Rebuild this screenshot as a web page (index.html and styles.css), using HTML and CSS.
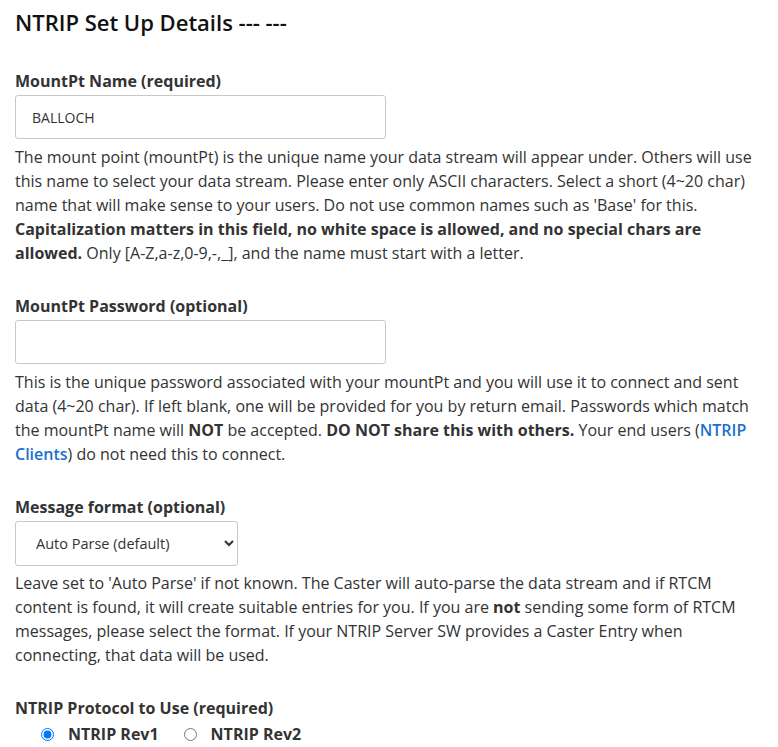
FILE: index.html
```html
<!DOCTYPE html>
<html>
<head>
<meta charset="utf-8">
<link rel="stylesheet" href="styles.css">
</head>
<body>
<div class="page">
  <h2 class="title">NTRIP Set Up Details --- ---</h2>

  <div class="field">
    <label class="label">MountPt Name (required)</label>
    <input class="text-input" type="text" value="BALLOCH">
    <p class="help">The mount point (mountPt) is the unique name your data stream will appear under. Others will use this name to select your data stream. Please enter only ASCII characters. Select a short (4~20 char) name that will make sense to your users. Do not use common names such as 'Base' for this. <b>Capitalization matters in this field, no white space is allowed, and no special chars are allowed.</b> Only [A-Z,a-z,0-9,-,_], and the name must start with a letter.</p>
  </div>

  <div class="field">
    <label class="label">MountPt Password (optional)</label>
    <input class="text-input" type="text" value="">
    <p class="help">This is the unique password associated with your mountPt and you will use it to connect and sent data (4~20 char). If left blank, one will be provided for you by return email. Passwords which match the mountPt name will <b>NOT</b> be accepted. <b>DO NOT share this with others.</b> Your end users (<a class="link" href="#">NTRIP Clients</a>) do not need this to connect.</p>
  </div>

  <div class="field">
    <label class="label">Message format (optional)</label>
    <select class="select">
      <option>Auto Parse (default)</option>
    </select>
    <p class="help">Leave set to 'Auto Parse' if not known. The Caster will auto-parse the data stream and if RTCM content is found, it will create suitable entries for you. If you are <b>not</b> sending some form of RTCM messages, please select the format. If your NTRIP Server SW provides a Caster Entry when connecting, that data will be used.</p>
  </div>

  <div class="field">
    <label class="label">NTRIP Protocol to Use (required)</label>
    <div class="radios">
      <label class="radio"><input type="radio" name="rev" checked>NTRIP Rev1</label>
      <label class="radio"><input type="radio" name="rev">NTRIP Rev2</label>
    </div>
  </div>
</div>
</body>
</html>
```
FILE: styles.css
```css
html, body {
  margin: 0;
  padding: 0;
  background: #fff;
}
body {
  font-family: "Open Sans", "Noto Sans", sans-serif;
  color: #333;
  font-size: 16px;
  line-height: 24px;
}
.page {
  padding: 9px 16px 0 15px;
}
.title {
  margin: 0 0 34px;
  font-size: 22px;
  font-weight: 600;
  line-height: 26px;
  color: #111;
}
.field {
  margin-bottom: 29px;
}
.label {
  display: block;
  font-weight: 700;
  margin-bottom: 2px;
}
.text-input {
  display: block;
  box-sizing: border-box;
  width: 371px;
  height: 44px;
  border: 1px solid #c8c8c8;
  border-radius: 3px;
  padding: 0 16px;
  font-family: "Open Sans", sans-serif;
  font-size: 14px;
  color: #333;
  margin: 0 0 6px;
}
.select {
  display: block;
  box-sizing: border-box;
  width: 223px;
  height: 45px;
  border: 1px solid #c8c8c8;
  border-radius: 3px;
  padding: 0 9px 0 16px;
  font-family: "Open Sans", sans-serif;
  font-size: 14.5px;
  color: #333;
  background: #fff;
  margin: 0 0 5px;
}
.help {
  margin: 0;
}
.help b {
  font-weight: 700;
}
.link {
  color: #1a6fd1;
  font-weight: 600;
  text-decoration: none;
}
.radios {
  display: flex;
  gap: 25px;
  padding-left: 26px;
}
.radio {
  display: flex;
  align-items: center;
  gap: 14px;
  font-weight: 700;
}
.radio input {
  margin: 0;
  width: 13px;
  height: 13px;
}
```
